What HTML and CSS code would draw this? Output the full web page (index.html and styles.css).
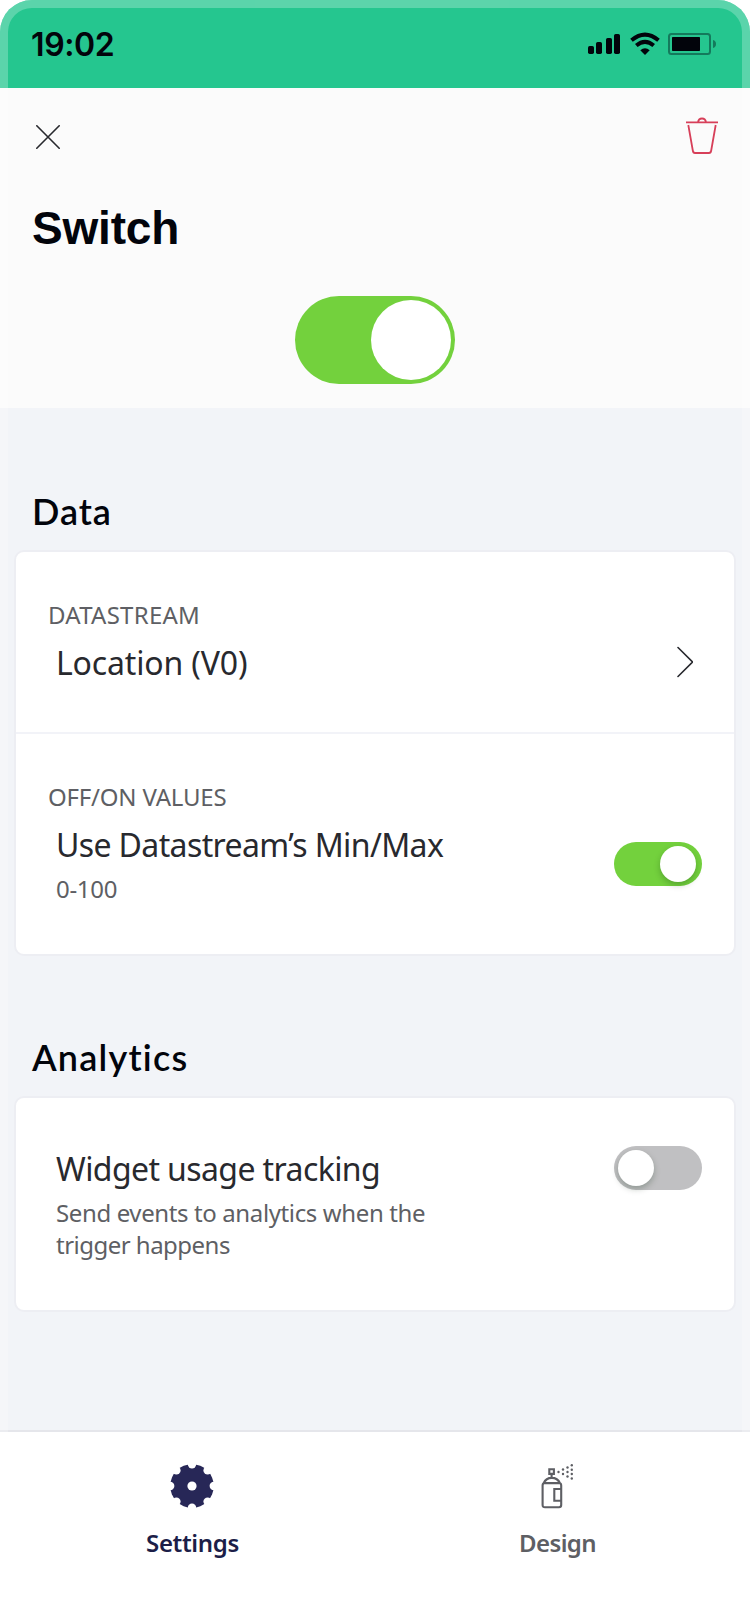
FILE: index.html
```html
<!DOCTYPE html>
<html lang="en">
<head>
<meta charset="utf-8">
<title>Switch</title>
<link rel="stylesheet" href="styles.css">
</head>
<body>
<div class="screen">
  <div class="statusbar">
    <span class="time">19:02</span>
    <svg class="status-icons" width="130" height="24" viewBox="0 0 130 24">
      <g fill="#02040b">
        <rect x="0" y="14" width="6" height="8" rx="1.7"/>
        <rect x="8" y="10" width="6" height="12" rx="1.7"/>
        <rect x="18" y="6" width="6" height="16" rx="1.7"/>
        <rect x="26" y="2" width="6" height="20" rx="1.7"/>
        <path d="M57 23 52.300 18.300Q57 14.300 61.700 18.300Z"/>
        <rect x="84" y="5" width="28" height="14" rx=".8"/>
      </g>
      <g fill="none" stroke="#02040b" stroke-width="4">
        <path d="M43.500 8.300Q57-3 70.500 8.300"/>
        <path d="M48.300 13.600Q57 6.200 65.700 13.600"/>
      </g>
      <rect x="81" y="2" width="41" height="20" rx="2.500" fill="none" stroke="#147a5c" stroke-width="2"/>
      <path d="M125 8q3 .8 3 4t-3 4z" fill="#147a5c"/>
    </svg>
  </div>

  <header class="header">
    <div class="toolbar">
      <svg width="24" height="24" viewBox="0 0 24 24" fill="none" stroke="#28292e" stroke-width="1.600" stroke-linecap="round"><path d="M.8.800 23.200 23.200M23.200.800.800 23.200"/></svg>
      <svg width="32" height="38" viewBox="0 0 32 38" fill="none" stroke="#d73f59" stroke-width="1.800"><path d="M0 5.400H32M12 5.400Q12.400 1.500 16 1.500T20 5.400M2.300 8 6.800 33.500Q7.200 36 9 36H23Q24.800 36 25.200 33.500L29.700 8"/></svg>
    </div>
    <h1 class="title">Switch</h1>
    <div class="switch switch-large"><span class="knob"></span></div>
  </header>

  <main class="content">
    <h2 class="section-title data">Data</h2>
    <section class="card">
      <div class="row row-stream">
        <div class="texts">
          <div class="label stream">DATASTREAM</div>
          <div class="value location">Location (V0)</div>
        </div>
        <svg class="chevron" width="16" height="32" viewBox="0 0 16 32" fill="none" stroke="#28292e" stroke-width="1.600" stroke-linecap="round"><path d="M1 1.500 15.500 16 1 30.500"/></svg>
      </div>
      <div class="row row-values">
        <div class="texts">
          <div class="label values">OFF/ON VALUES</div>
          <div class="value minmax">Use Datastream’s Min/Max</div>
          <div class="note range">0-100</div>
        </div>
        <div class="switch switch-small"><span class="knob"></span></div>
      </div>
    </section>
    <h2 class="section-title analytics">Analytics</h2>
    <section class="card">
      <div class="row row-tracking">
        <div class="texts">
          <div class="value tracking">Widget usage tracking</div>
          <div class="note events">Send events to analytics when the<br><span class="tight">trigger happens</span></div>
        </div>
        <div class="switch switch-small off"><span class="knob"></span></div>
      </div>
    </section>
  </main>

  <nav class="tabs">
    <div class="tab active">
      <svg class="gear" width="44" height="44" viewBox="-22 -22 44 44">
        <defs><mask id="gear"><circle r="21.800" fill="#fff"/>
          <g fill="#000"><circle r="4.600"/>
          <circle cy="-21.800" r="4.200"/><circle cy="21.800" r="4.200"/><circle cx="21.800" r="4.200"/><circle cx="-21.800" r="4.200"/>
          <circle cx="15.600" cy="-15.600" r="4.200"/><circle cx="15.600" cy="15.600" r="4.200"/><circle cx="-15.600" cy="-15.600" r="4.200"/><circle cx="-15.600" cy="15.600" r="4.200"/></g>
        </mask></defs>
        <rect x="-22" y="-22" width="44" height="44" fill="#272757" mask="url(#gear)"/>
      </svg>
      <span class="tab-name">Settings</span>
    </div>
    <div class="tab">
      <svg class="spray" width="44" height="46" viewBox="0 0 44 46" fill="none" stroke="#5e5f64" stroke-width="2.100">
        <path d="M8.300 6.300h4.600v4.600H8.300zM10.600 11v4M2.600 20.200Q5 14.900 10.800 14.900T19 20.200M2.600 20.200H19M1.600 22.500Q1.600 20.200 3.500 20H18.500Q20.200 20.300 20.200 22.500V42Q20.200 44.200 18 44.200H4Q1.600 44.200 1.600 42ZM20 26H13.300V37.800H20"/>
        <g fill="#5e5f64" stroke="none"><circle cx="17.500" cy="9" r="1.200"/><circle cx="22" cy="6.500" r="1.200"/><circle cx="22" cy="11" r="1.200"/><circle cx="26.500" cy="4.500" r="1.200"/><circle cx="26.500" cy="9" r="1.200"/><circle cx="26.500" cy="13.500" r="1.200"/><circle cx="30.800" cy="2.200" r="1.200"/><circle cx="30.800" cy="6.700" r="1.200"/><circle cx="30.800" cy="11" r="1.200"/><circle cx="30.800" cy="15.500" r="1.200"/></g>
      </svg>
      <span class="tab-name design">Design</span>
    </div>
  </nav>
  <div class="bezel"></div>
</div>
</body>
</html>
```

FILE: styles.css
```css
* { box-sizing: border-box; }
body { margin: 0; background: #fff; }
.screen {
  position: relative;
  display: flex;
  flex-direction: column;
  width: 750px;
  height: 1624px;
  overflow: hidden;
  border-radius: 32px 32px 0 0;
  background: #f2f4f8;
  font-family: "Noto Sans", "Open Sans", sans-serif;
}
/* translucent device edge laid over the whole screen */
.bezel {
  position: absolute;
  inset: 0;
  border: 8px solid rgba(255, 255, 255, .25);
  border-bottom: 0;
  border-radius: 32px 32px 0 0;
}
.statusbar {
  display: flex;
  justify-content: space-between;
  height: 88px;
  padding: 24px 32px 0 31px;
  background: #25c68f;
}
.time {
  margin-top: 1px;
  font: 600 32px/40px Inter, sans-serif;
  letter-spacing: -.4px;
  color: #02040b;
}
.status-icons { margin-top: 8px; }
.header {
  display: flow-root;
  height: 320px;
  background: #fbfbfb;
}
.toolbar {
  display: flex;
  justify-content: space-between;
  align-items: center;
  height: 38px;
  margin: 30px 32px 0 36px;
}
.toolbar svg:last-child { margin-top: -2px; }
.title {
  margin: 44px 0 0 32px;
  font: bold 46px/56px "Liberation Sans", sans-serif;
  letter-spacing: -.2px;
  color: #02040b;
}
.switch {
  display: flex;
  align-items: center;
  justify-content: flex-end;
  background: #73d13d;
}
.switch-large {
  width: 160px;
  height: 88px;
  margin: 40px auto 0;
  padding: 4px;
  border-radius: 44px;
}
.knob {
  width: 80px;
  height: 80px;
  border-radius: 50%;
  background: #fff;
}
.switch-small {
  flex: none;
  width: 88px;
  height: 44px;
  padding: 4px 6px;
  border-radius: 22px;
}
.switch-small .knob {
  width: 36px;
  height: 36px;
  box-shadow: 0 3px 6px rgba(0, 35, 11, .25);
}
.off {
  justify-content: flex-start;
  padding: 4px;
  background: #c0c0c2;
}
.content {
  flex: 1;
  padding: 0 14px;
}
.section-title {
  margin: 0;
  height: 48px;
  padding-left: 18px;
  font: 600 36px/48px Lato, sans-serif;
  letter-spacing: .95px;
  color: #02040b;
}
.data { margin-top: 79px; margin-bottom: 15px; }
.analytics { margin-top: 77px; margin-bottom: 15px; letter-spacing: 1.2px; }
.card {
  border: 2px solid #edeef3;
  border-radius: 10px;
  background: #fff;
}
.row {
  display: flex;
  justify-content: space-between;
  padding: 0 32px;
}
.row-stream { height: 182px; padding-top: 47px; border-bottom: 2px solid #f2f3f8; }
.row-values { height: 220px; padding-top: 47px; }
.row-tracking { height: 212px; padding-top: 48px; }
.chevron { margin: 47px 9px 0 0; }
.row-values .switch { margin-top: 61px; }
.label {
  height: 32px;
  font-size: 24px;
  line-height: 32px;
  color: #5e5f64;
}
.stream { letter-spacing: .25px; }
.values { letter-spacing: -.2px; }
.value {
  height: 40px;
  margin: 12px 0 0 8px;
  font-size: 32px;
  line-height: 40px;
  color: #28292e;
}
.location { letter-spacing: -.15px; }
.minmax { letter-spacing: -.62px; }
.note {
  margin: 8px 0 0 8px;
  font-size: 24px;
  line-height: 32px;
  color: #5e5f64;
}
.range { letter-spacing: -.3px; }
.tracking { margin-top: 3px; letter-spacing: -.6px; }
.events { letter-spacing: -.38px; }
.tight { letter-spacing: -.52px; }
.tabs {
  display: flex;
  height: 194px;
  padding: 0 10px;
  border-top: 2px solid #e5e6eb;
  background: #fff;
}
.tab {
  display: flex;
  flex: 1;
  flex-direction: column;
  align-items: center;
  padding-top: 32px;
  color: #5e5f64;
}
.tab:last-child { padding-top: 31px; }
.tab.active { color: #1c1e48; }
.gear { margin-left: -1px; }
.spray { margin-left: 10px; }
.tab-name {
  margin-top: 18px;
  font-size: 24px;
  font-weight: 600;
  line-height: 32px;
  letter-spacing: -.35px;
}
.design { letter-spacing: -.6px; }
.active .tab-name { margin-top: 19px; }
```
